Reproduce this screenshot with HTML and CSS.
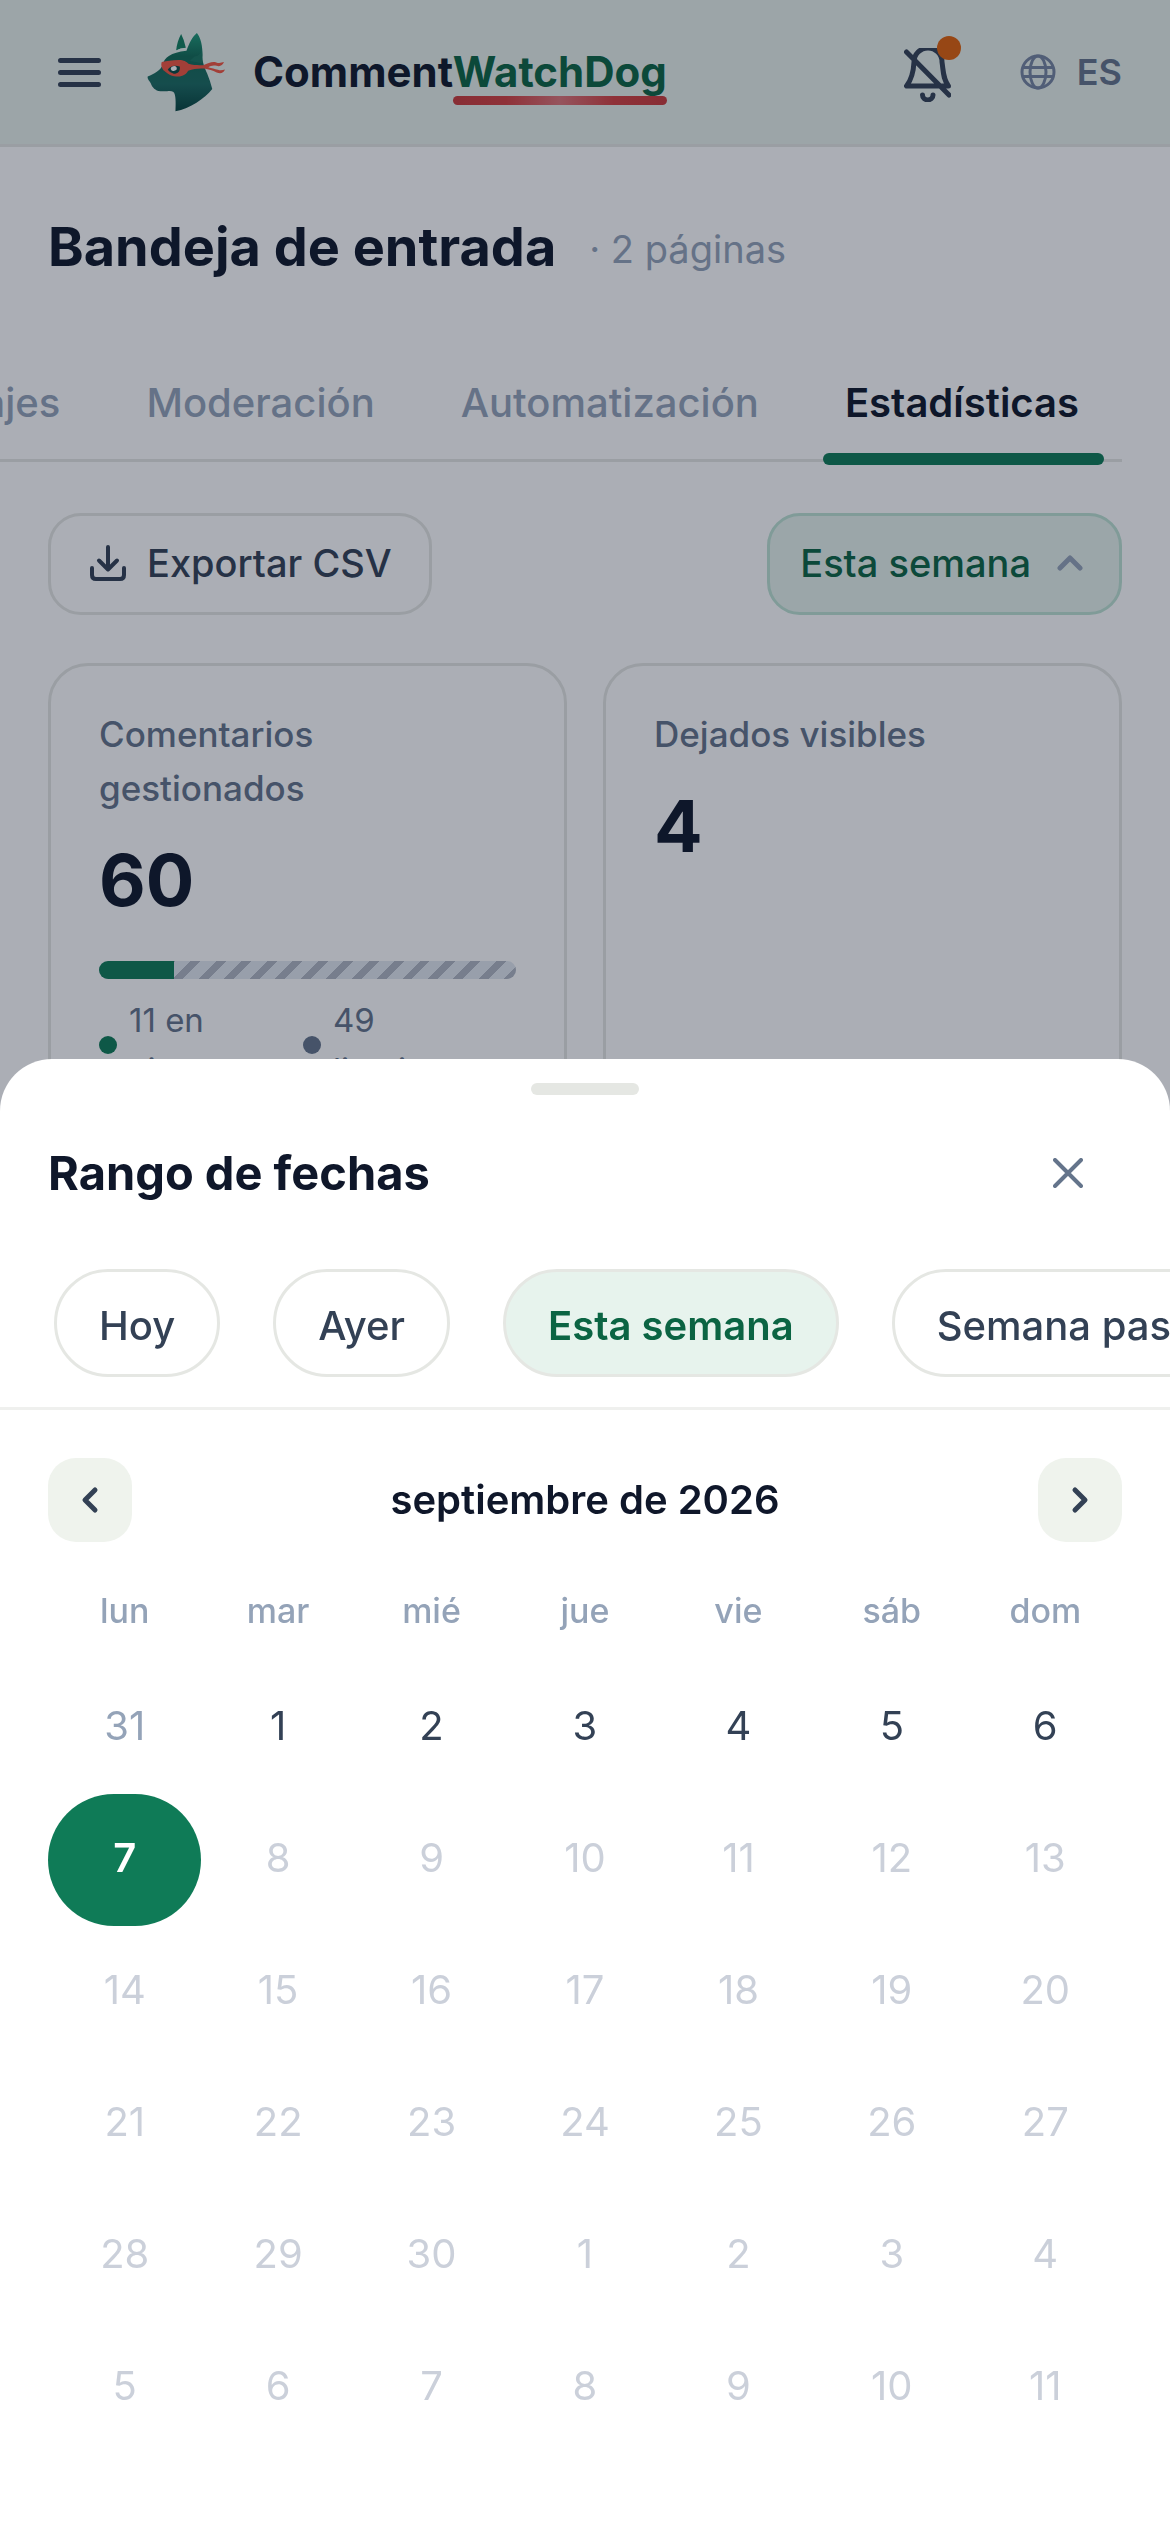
FILE: index.html
```html
<!DOCTYPE html>
<html lang="es">
<head>
<meta charset="utf-8">
<meta name="viewport" content="width=device-width, initial-scale=1">
<title>Bandeja de entrada · CommentWatchDog</title>
<link rel="stylesheet" href="styles.css">
</head>
<body>
<div class="page">
  <header class="topbar">
    <button class="icon-btn" type="button" aria-label="Menú">
      <svg class="icon-menu" viewBox="0 0 43 29" aria-hidden="true"><path d="M2.5 2.5h38M2.5 14.5h38M2.5 26.5h38"/></svg>
    </button>
    <a class="brand" href="#">
      <svg class="brand-logo" viewBox="50 38 236 236" aria-hidden="true">
        <defs>
          <linearGradient id="fur" x1="0" y1="0" x2="0" y2="1">
            <stop offset="0" stop-color="#1f9b78"/><stop offset=".3" stop-color="#116a55"/><stop offset=".65" stop-color="#1a6a60"/><stop offset="1" stop-color="#05443d"/>
          </linearGradient>
        </defs>
        <path d="M152 41C144 55 139 72 137 90Q150 82 166 82Q161 58 152 41Z" fill="#10805f"/>
        <path d="M136 93Q150 84 169 85" fill="none" stroke="#e6f5ef" stroke-width="4"/>
        <path d="M199 38C211 52 216 78 216 104C214 122 221 140 230 160Q239 182 245 205C221 235 180 262 135 272C136 250 136 232 133 222C131 211 122 211 110 212L90 212C74 210 66 200 62 190C60 184 50 176 52 168C72 160 92 150 98 130C102 112 120 96 168 91C176 70 184 50 199 38Z" fill="url(#fur)"/>
        <path d="M192 108Q213 105 214 84L216 128L178 122Z" fill="#2b8a72" opacity=".35"/>
        <path d="M94 125C110 122 125 119 145 119C160 119 168 124 174 130C190 135 207 134 218 134C234 127 246 122 257 126C265 129 272 127 280 125C276 135 268 139 258 136C248 133 240 136 233 140C244 144 252 144 262 148C270 151 276 149 283 147C278 158 270 161 258 156C246 149 235 147 220 144C204 143 188 145 173 151C168 161 155 170 138 168C118 167 107 155 99 149C93 142 91 132 94 125Z" fill="#f2553f"/>
        <path d="M112 148C116 138 131 132 148 138C150 152 142 160 130 160Q119 158 112 148Z" fill="#074a42"/>
        <ellipse cx="130" cy="144" rx="9" ry="7" fill="#fff" transform="rotate(-15 130 144)"/>
      </svg>
      <span class="brand-name">Comment<span class="brand-accent">WatchDog</span></span>
    </a>
    <div class="top-actions">
      <button class="icon-btn bell" type="button" aria-label="Notificaciones desactivadas">
        <svg class="icon-bell" viewBox="0 0 47 54" aria-hidden="true">
          <path d="M2.500 38H44.500C39 31 39.500 24 38 14A14 14 0 0 0 10 14C9.500 24 8 31 2.500 38ZM18.500 47C18.500 53.500 29 53.500 29 47M2.500 4L45 47"/>
        </svg>
        <span class="bell-dot"></span>
      </button>
      <button class="lang" type="button">
        <svg class="icon-globe" viewBox="0 0 36 36" aria-hidden="true"><circle cx="18" cy="18" r="16"/><ellipse cx="18" cy="18" rx="8" ry="16"/><path d="M3 13.500H33M3 22.500H33"/></svg>
        ES
      </button>
    </div>
  </header>

  <main class="content">
    <div class="heading">
      <h1>Bandeja de entrada</h1>
      <span class="heading-note">· 2 páginas</span>
    </div>

    <nav class="tabs" aria-label="Secciones">
      <a class="tab" href="#">Mensajes</a>
      <a class="tab" href="#">Moderación</a>
      <a class="tab" href="#">Automatización</a>
      <a class="tab tab-active" href="#" aria-current="page">Estadísticas</a>
    </nav>

    <div class="toolbar">
      <button class="btn" type="button">
        <svg class="icon-download" viewBox="0 0 36 36" aria-hidden="true"><path d="M18 2V24M9 15.500L18 24.500L27 15.500M2 23V30Q2 34 6 34H30Q34 34 34 30V23"/></svg>
        Exportar CSV
      </button>
      <button class="btn btn-range" type="button" aria-expanded="true">
        Esta semana
        <svg class="icon-up" viewBox="0 0 26 16" aria-hidden="true"><path d="M3 13L13 3L23 13"/></svg>
      </button>
    </div>

    <div class="cards">
      <section class="card">
        <h2 class="card-label">Comentarios gestionados</h2>
        <p class="card-value">60</p>
        <div class="meter"><span class="meter-fill" style="width:18%"></span></div>
        <ul class="legend">
          <li><span class="dot dot-live"></span>11 en vivo</li>
          <li><span class="dot"></span>49 limpieza</li>
        </ul>
      </section>
      <section class="card">
        <h2 class="card-label">Dejados visibles</h2>
        <p class="card-value">4</p>
      </section>
    </div>
  </main>
</div>

<div class="overlay">
  <section class="sheet" role="dialog" aria-modal="true" aria-labelledby="sheet-title">
    <span class="handle"></span>
    <div class="sheet-head">
      <h2 class="sheet-title" id="sheet-title">Rango de fechas</h2>
      <button class="close" type="button" aria-label="Cerrar">
        <svg class="icon-close" viewBox="0 0 30 30" aria-hidden="true"><path d="M2 2L28 28M28 2L2 28"/></svg>
      </button>
    </div>
    <div class="chips">
      <button class="chip" type="button">Hoy</button>
      <button class="chip" type="button">Ayer</button>
      <button class="chip chip-active" type="button" aria-pressed="true">Esta semana</button>
      <button class="chip" type="button">Semana pasada</button>
    </div>
    <div class="calendar">
      <div class="month">
        <button class="step" type="button" aria-label="Mes anterior"><svg class="icon-step" viewBox="0 0 18 28" aria-hidden="true"><path d="M14 4L4 14L14 24"/></svg></button>
        <h3 class="month-name">septiembre de 2026</h3>
        <button class="step" type="button" aria-label="Mes siguiente"><svg class="icon-step" viewBox="0 0 18 28" aria-hidden="true"><path d="M4 4L14 14L4 24"/></svg></button>
      </div>
      <table class="days">
        <thead>
          <tr><th>lun</th><th>mar</th><th>mié</th><th>jue</th><th>vie</th><th>sáb</th><th>dom</th></tr>
        </thead>
        <tbody>
          <tr><td><button class="day day-outside">31</button></td><td><button class="day">1</button></td><td><button class="day">2</button></td><td><button class="day">3</button></td><td><button class="day">4</button></td><td><button class="day">5</button></td><td><button class="day">6</button></td></tr>
          <tr><td><button class="day day-selected">7</button></td><td><button class="day" disabled>8</button></td><td><button class="day" disabled>9</button></td><td><button class="day" disabled>10</button></td><td><button class="day" disabled>11</button></td><td><button class="day" disabled>12</button></td><td><button class="day" disabled>13</button></td></tr>
          <tr><td><button class="day" disabled>14</button></td><td><button class="day" disabled>15</button></td><td><button class="day" disabled>16</button></td><td><button class="day" disabled>17</button></td><td><button class="day" disabled>18</button></td><td><button class="day" disabled>19</button></td><td><button class="day" disabled>20</button></td></tr>
          <tr><td><button class="day" disabled>21</button></td><td><button class="day" disabled>22</button></td><td><button class="day" disabled>23</button></td><td><button class="day" disabled>24</button></td><td><button class="day" disabled>25</button></td><td><button class="day" disabled>26</button></td><td><button class="day" disabled>27</button></td></tr>
          <tr><td><button class="day" disabled>28</button></td><td><button class="day" disabled>29</button></td><td><button class="day" disabled>30</button></td><td><button class="day" disabled>1</button></td><td><button class="day" disabled>2</button></td><td><button class="day" disabled>3</button></td><td><button class="day" disabled>4</button></td></tr>
          <tr><td><button class="day" disabled>5</button></td><td><button class="day" disabled>6</button></td><td><button class="day" disabled>7</button></td><td><button class="day" disabled>8</button></td><td><button class="day" disabled>9</button></td><td><button class="day" disabled>10</button></td><td><button class="day" disabled>11</button></td></tr>
        </tbody>
      </table>
    </div>
  </section>
</div>
</body>
</html>
```

FILE: styles.css
```css
:root {
  --ink: #0f172a;
  --ink-2: #334155;
  --slate: #64748b;
  --muted: #94a3b8;
  --faint: #cbd0da;
  --line: #e5e7e3;
  --green: #0f7b57;
  --green-dark: #0b6443;
  --mint: #e7f3ed;
}

* { box-sizing: border-box; }

body {
  margin: 0;
  background: #fff;
  color: var(--ink);
  font-family: Inter, "Liberation Sans", sans-serif;
  font-size: 38px;
  line-height: 54px;
}

h1, h2, h3, p, ul { margin: 0; padding: 0; }
a { color: inherit; text-decoration: none; }
button {
  margin: 0;
  padding: 0;
  border: 0;
  background: none;
  color: inherit;
  font: inherit;
}
svg {
  display: block;
  flex: none;
  fill: none;
  stroke-linecap: round;
  stroke-linejoin: round;
}

.page { height: 100vh; overflow: hidden; }

/* Top bar */
.topbar {
  display: flex;
  align-items: center;
  height: 147px;
  padding: 0 48px 0 58px;
  border-bottom: 3px solid var(--line);
  background: #e9f1ec;
}
.icon-menu { width: 43px; height: 29px; stroke: var(--ink-2); stroke-width: 5; }
.brand { display: flex; align-items: center; gap: 27px; margin-left: 46px; }
.brand-logo { width: 79px; height: 79px; }
.brand-name { font-size: 42px; font-weight: 700; }
.brand-accent { position: relative; color: var(--green-dark); }
.brand-accent::after {
  content: "";
  position: absolute;
  right: 0;
  bottom: -8px;
  left: 0;
  height: 9px;
  border-radius: 5px;
  background: linear-gradient(90deg, #c93a3a, #d44040 25%, #de7578 50%, #d44040 75%, #c93a3a);
}
.top-actions { display: flex; align-items: center; gap: 69px; margin-left: auto; }
.bell { position: relative; margin-top: 5px; }
.icon-bell { width: 47px; height: 54px; stroke: var(--ink-2); stroke-width: 5; }
.bell-dot {
  position: absolute;
  top: -12px;
  right: -10px;
  width: 24px;
  height: 24px;
  border-radius: 50%;
  background: #e0620a;
}
.lang {
  display: flex;
  align-items: center;
  gap: 21px;
  color: var(--slate);
  font-size: 36px;
  font-weight: 600;
}
.icon-globe { width: 36px; height: 36px; stroke: #7585a0; stroke-width: 3; }

/* Inbox */
.content { padding: 64px 48px 0; }
.heading { display: flex; align-items: center; gap: 33px; }
h1 { font-size: 54px; font-weight: 700; line-height: 72px; }
.heading-note { padding-top: 4px; color: var(--muted); }

.tabs {
  display: flex;
  justify-content: flex-end;
  margin: 64px 0 0 -48px;
  border-bottom: 3px solid var(--line);
  color: var(--muted);
  font-size: 40px;
  font-weight: 500;
}
.tab { position: relative; padding: 29px 43px; }
.tab-active { color: var(--ink); font-weight: 600; }
.tab-active::after {
  content: "";
  position: absolute;
  right: 18px;
  bottom: -6px;
  left: 21px;
  height: 12px;
  border-radius: 6px;
  background: var(--green);
}

.toolbar { display: flex; justify-content: space-between; margin-top: 51px; }
.btn {
  display: flex;
  align-items: center;
  gap: 21px;
  height: 102px;
  padding: 0 37px 2px 39px;
  border: 3px solid var(--line);
  border-radius: 33px;
  color: var(--ink-2);
  font-weight: 500;
}
.btn-range {
  gap: 26px;
  padding: 0 36px 2px 30px;
  border-color: #bde2d3;
  background: var(--mint);
  color: var(--green-dark);
}
.icon-download { width: 36px; height: 36px; stroke: var(--ink-2); stroke-width: 4; }
.icon-up { width: 26px; height: 16px; stroke: var(--muted); stroke-width: 5; }

.cards { display: grid; grid-template-columns: 1fr 1fr; gap: 36px; margin-top: 48px; }
.card { padding: 41px 48px 48px; border: 3px solid var(--line); border-radius: 40px; }
.card-label { color: var(--slate); font-size: 35px; font-weight: 500; }
.card-value { margin-top: 23px; font-size: 72px; font-weight: 700; line-height: 84px; }
.meter {
  height: 18px;
  margin-top: 39px;
  overflow: hidden;
  border-radius: 9px;
  background: repeating-linear-gradient(135deg, #e2e8f0 0 11px, #afb6c2 11px 18px);
}
.meter-fill { display: block; height: 100%; background: var(--green); }
.legend {
  display: grid;
  grid-template-columns: 192px 1fr;
  gap: 12px;
  margin-top: 16px;
  color: var(--slate);
  font-size: 33px;
  line-height: 50px;
  list-style: none;
}
.legend li { display: flex; align-items: center; gap: 12px; padding-right: 48px; }
.dot { flex: none; width: 18px; height: 18px; border-radius: 50%; background: var(--slate); }
.dot-live { background: var(--green); }

/* Date range sheet */
.overlay {
  position: fixed;
  inset: 0;
  display: flex;
  flex-direction: column;
  justify-content: flex-end;
  background: rgba(15, 23, 42, 0.35);
}
.sheet {
  padding-top: 24px;
  overflow: hidden;
  border-radius: 52px 52px 0 0;
  background: #fff;
}
.handle { display: block; width: 108px; height: 12px; margin: 0 auto; border-radius: 6px; background: var(--line); }
.sheet-head {
  display: flex;
  align-items: center;
  justify-content: space-between;
  margin-top: 24px;
  padding: 0 48px;
}
.sheet-title { font-size: 47px; font-weight: 700; }
.close { display: grid; place-items: center; width: 108px; height: 108px; }
.icon-close { width: 30px; height: 30px; stroke: var(--slate); stroke-width: 4; }

.chips {
  display: flex;
  gap: 53px;
  margin-top: 42px;
  padding: 0 54px 30px;
  overflow: hidden;
  border-bottom: 3px solid #eff0ee;
}
.chip {
  flex: none;
  height: 108px;
  padding: 6px 42px 0;
  border: 3px solid var(--line);
  border-radius: 54px;
  color: var(--ink-2);
  font-size: 40px;
  font-weight: 500;
}
.chip-active { background: var(--mint); color: var(--green-dark); font-weight: 600; }

.calendar { padding: 48px 48px 78px; }
.month { display: flex; align-items: center; justify-content: space-between; }
.month-name { font-size: 40px; font-weight: 600; }
.step {
  display: grid;
  place-items: center;
  width: 84px;
  height: 84px;
  border-radius: 28px;
  background: #eff3ed;
}
.icon-step { width: 18px; height: 28px; stroke: var(--ink-2); stroke-width: 5; }
.days { width: 100%; margin-top: 36px; border-collapse: collapse; table-layout: fixed; }
.days th {
  height: 84px;
  padding: 0 0 18px;
  color: var(--muted);
  font-size: 34px;
  font-weight: 500;
}
.days td { padding: 0; }
.day {
  display: block;
  width: 100%;
  height: 132px;
  padding-bottom: 4px;
  border-radius: 66px;
  color: var(--ink-2);
  font-size: 40px;
}
.day:disabled { color: var(--faint); }
.day-outside { color: var(--muted); }
.day-selected { background: var(--green); color: #fff; font-weight: 600; }
```
